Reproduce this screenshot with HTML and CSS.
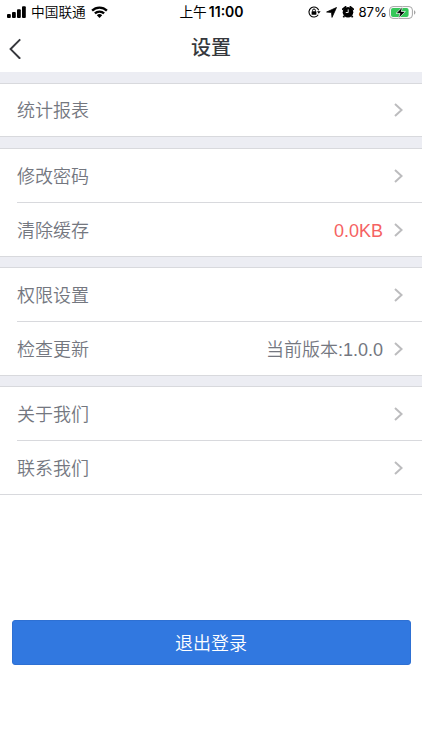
FILE: index.html
```html
<!DOCTYPE html>
<html lang="zh-CN">
    <head>
        <meta charset="utf-8">
        <meta name="viewport" content="width=device-width, initial-scale=1">
        <link rel="stylesheet" href="styles.css">
        <title>设置</title>
    </head>
    <body>
        <div class="statusBar">
            <div class="statusLeft">
                <svg class="signal" width="19" height="12" viewBox="0 0 19 12">
                    <rect x="0" y="8" width="3.8" height="4" rx="1" />
                    <rect x="5" y="6" width="3.8" height="6" rx="1" />
                    <rect x="10" y="3.2" width="3.8" height="8.8" rx="1" />
                    <rect x="15" y="0.2" width="3.8" height="11.8" rx="1" />
                </svg>
                <span class="carrier">中国联通</span>
                <svg class="wifi" width="17" height="12" viewBox="0 0 17 12">
                    <g fill="none" stroke="#000" stroke-width="2.3">
                        <path d="M1.1 4.6 A10.6 10.6 0 0 1 15.9 4.6" />
                        <path d="M3.9 7.4 A6.6 6.6 0 0 1 13.1 7.4" />
                    </g>
                    <path d="M5.8 9.2 A3.9 3.9 0 0 1 11.2 9.2 L8.5 12 Z" />
                </svg>
            </div>
            <div class="statusTime">上午<b>11:00</b></div>
            <div class="statusRight">
                <svg class="lock" width="13" height="12" viewBox="0 0 13 12">
                    <path d="M10.7 4.3 A5 5 0 1 0 10.2 8.7" fill="none" stroke="#000" stroke-width="1.1" />
                    <path d="M9 5.2 H12.6 L10.8 7.8 Z" />
                    <rect x="3.6" y="5.3" width="4.8" height="3.5" rx="0.5" />
                    <path d="M4.6 5.5 V4.4 A1.4 1.4 0 0 1 7.4 4.4 V5.5" fill="none" stroke="#000" />
                </svg>
                <svg class="arrow" width="11" height="11" viewBox="0 0 11 11">
                    <path d="M10.5 0.5 L6 10.4 L5.5 5.5 L0.6 5 Z" stroke="#000" stroke-width="0.8" stroke-linejoin="round" />
                </svg>
                <svg class="alarm" width="12" height="12" viewBox="0 0 12 12">
                    <path d="M0.8 3.2 L3.6 0.9 M8.4 0.9 L11.2 3.2" stroke="#000" stroke-width="1.8" stroke-linecap="round" />
                    <circle cx="6" cy="6.2" r="5.3" />
                    <path d="M2.2 9.8 L1.4 11.4 M9.8 9.8 L10.6 11.4" stroke="#000" stroke-width="1.7" />
                    <path d="M6.2 3.4 V6.5 H3.8" fill="none" stroke="#fff" stroke-width="0.9" />
                </svg>
                <span class="percent">87%</span>
                <svg class="battery" width="27" height="13" viewBox="0 0 27 13">
                    <rect x="0.6" y="0.6" width="22.8" height="11.8" rx="3.4" fill="#fff" stroke="#a5a5a5" />
                    <rect x="2" y="2" width="17.6" height="9" rx="2" fill="#35c759" />
                    <path d="M25 4.3 A2.4 2.4 0 0 1 25 8.7 Z" fill="#a5a5a5" />
                    <path d="M13.7 0.8 L7 7.4 H11 L9.5 12.3 L16.4 5.5 H12.3 Z" stroke="#fff" stroke-width="0.7" />
                </svg>
            </div>
        </div>

        <div class="navBar">
            <svg class="back" width="12" height="22" viewBox="0 0 12 22">
                <path d="M11.2 2.4 L1.6 12.1 L11.2 21.8" fill="none" stroke="#36383d" stroke-width="2" />
            </svg>
            <h1>设置</h1>
        </div>

        <div class="settings">
            <div class="group single">
                <div class="row">
                    <span class="label">统计报表</span>
                    <svg class="chevron" width="9" height="14" viewBox="0 0 9 14"><path d="M1 1 L7.6 7 L1 13" /></svg>
                </div>
            </div>
            <div class="group">
                <div class="row">
                    <span class="label">修改密码</span>
                    <svg class="chevron" width="9" height="14" viewBox="0 0 9 14"><path d="M1 1 L7.6 7 L1 13" /></svg>
                </div>
                <div class="row">
                    <span class="label">清除缓存</span>
                    <span class="value red">0.0KB</span>
                    <svg class="chevron" width="9" height="14" viewBox="0 0 9 14"><path d="M1 1 L7.6 7 L1 13" /></svg>
                </div>
            </div>
            <div class="group">
                <div class="row">
                    <span class="label">权限设置</span>
                    <svg class="chevron" width="9" height="14" viewBox="0 0 9 14"><path d="M1 1 L7.6 7 L1 13" /></svg>
                </div>
                <div class="row">
                    <span class="label">检查更新</span>
                    <span class="value">当前版本:1.0.0</span>
                    <svg class="chevron" width="9" height="14" viewBox="0 0 9 14"><path d="M1 1 L7.6 7 L1 13" /></svg>
                </div>
            </div>
            <div class="group">
                <div class="row">
                    <span class="label">关于我们</span>
                    <svg class="chevron" width="9" height="14" viewBox="0 0 9 14"><path d="M1 1 L7.6 7 L1 13" /></svg>
                </div>
                <div class="row">
                    <span class="label">联系我们</span>
                    <svg class="chevron" width="9" height="14" viewBox="0 0 9 14"><path d="M1 1 L7.6 7 L1 13" /></svg>
                </div>
            </div>
        </div>

        <button class="logout">退出登录</button>
    </body>
</html>
```
FILE: styles.css
```css
* {
    box-sizing: border-box;
}
body {
    margin: 0;
    background: #fff;
    font-family: "Liberation Sans", "Noto Sans CJK SC", sans-serif;
}
svg {
    display: block;
    flex: none;
}
.statusBar {
    display: grid;
    grid-template-columns: 1fr auto 1fr;
    height: 24px;
    padding: 0 6px 0 7px;
    font-family: Inter, "Noto Sans CJK SC", sans-serif;
    font-size: 13.7px;
    line-height: 24px;
}
.statusLeft, .statusRight {
    display: flex;
    align-items: center;
}
.statusRight {
    justify-content: flex-end;
}
.carrier {
    margin: 0 5px 0 5px;
    font-weight: 350;
}
.statusTime b {
    margin-left: 2px;
    font-size: 14px;
    font-weight: 600;
}
.arrow {
    margin: 0 5px;
}
.percent {
    margin: 0 2px 0 4px;
    font-size: 13.2px;
}
.navBar {
    display: grid;
    grid-template-columns: 1fr auto 1fr;
    align-items: center;
    height: 48px;
    padding: 0 9px;
}
h1 {
    margin: 0;
    color: #36383d;
    font-size: 20px;
    font-weight: 500;
    line-height: 46px;
}
.settings {
    display: flex;
    flex-direction: column;
    gap: 10px;
    padding-top: 11px;
    background: #ecedf3;
}
.group {
    padding-left: 17px;
    border-top: 1px solid #d8d9dd;
    border-bottom: 1px solid #d8d9dd;
    background: #fff;
}
.row {
    display: flex;
    align-items: center;
    height: 53px;
    padding-right: 19px;
    color: #74777f;
    font-size: 18px;
    font-weight: 350;
    line-height: 27px;
}
.row + .row {
    height: 54px;
    border-top: 1px solid #d8d9dd;
}
.single {
    margin-bottom: 1px;
}
.single .row {
    height: 52px;
}
.label, .value {
    padding-top: 3px;
}
.label {
    flex: 1;
}
.value {
    margin-right: 11px;
}
.red {
    color: #f56262;
}
.chevron path {
    fill: none;
    stroke: #bcbcbe;
    stroke-width: 2;
}
.logout {
    display: block;
    width: 399px;
    height: 45px;
    margin: 125px auto 0;
    padding: 0 0 2px;
    border: 1px solid #2e70d3;
    border-radius: 3px;
    background: #3178e0;
    color: #fff;
    font-family: inherit;
    font-size: 18px;
    font-weight: 350;
}
```
